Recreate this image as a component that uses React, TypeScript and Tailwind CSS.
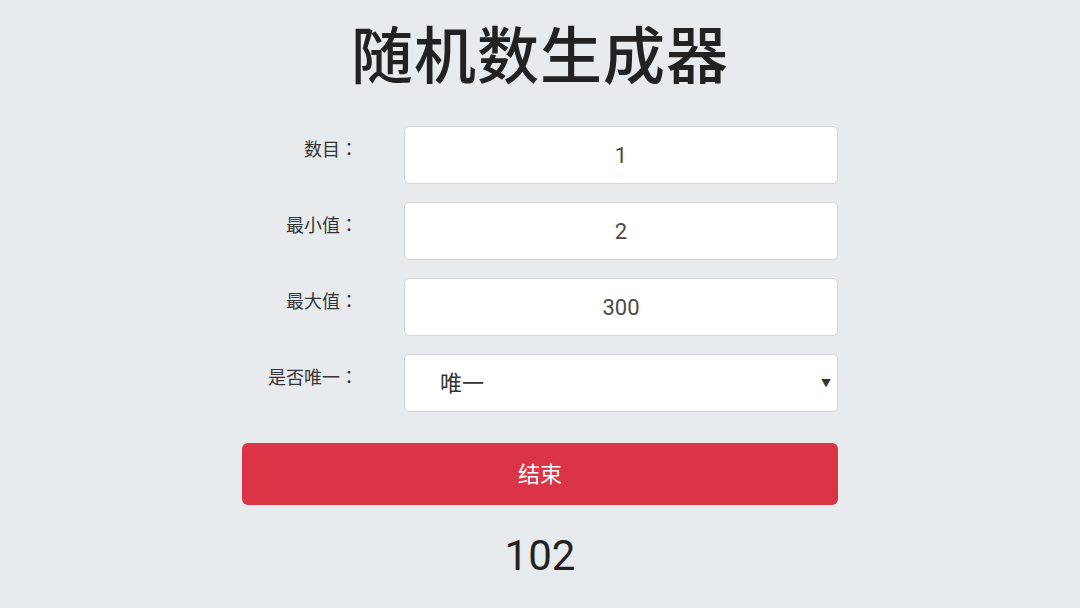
import React from "react";

const font = { fontFamily: '"Roboto", "Noto Sans CJK SC", sans-serif' } as const;
const labelFont = { fontFamily: '"Noto Sans CJK TC", "Noto Sans CJK SC", sans-serif' } as const;

function Row({ label, children }: { label: string; children: React.ReactNode }) {
  return (
    <div className="flex items-start">
      <div className="w-[162px] shrink-0 pr-[46px] pt-[9px] text-right text-[18px] leading-[26px] text-[#333]" style={labelFont}>{label}</div>
      <div className="flex-1">{children}</div>
    </div>
  );
}

export default function App() {
  return (
    <div className="w-[1080px] h-[608px] bg-[#e8ebee] overflow-hidden" style={font}>
      <div className="flex flex-col items-center">
        <h1 className="mt-[20px] text-[62px] leading-[76px] font-medium text-[#222] tracking-[1px]">随机数生成器</h1>
        <div className="mt-[30px] w-[596px] flex flex-col gap-[18px]">
          <Row label="数目：">
            <div className="h-[58px] rounded-[5px] border border-[#cfd4d9] bg-white flex items-center justify-center text-[22px] text-[#4a4a4a]">1</div>
          </Row>
          <Row label="最小值：">
            <div className="h-[58px] rounded-[5px] border border-[#cfd4d9] bg-white flex items-center justify-center text-[22px] text-[#4a4a4a]">2</div>
          </Row>
          <Row label="最大值：">
            <div className="h-[58px] rounded-[5px] border border-[#cfd4d9] bg-white flex items-center justify-center text-[22px] text-[#4a4a4a]">300</div>
          </Row>
          <Row label="是否唯一：">
            <div className="h-[58px] rounded-[5px] border border-[#cfd4d9] bg-white flex items-center pl-[35px] pr-[6px] text-[22px] text-[#333]">
              <span className="flex-1">唯一</span>
              <span className="text-[10px] text-[#333]">▼</span>
            </div>
          </Row>
          <button className="mt-[13px] h-[62px] w-full rounded-[6px] bg-[#dc3447] text-white text-[22px]">结束</button>
          <div className="mt-[5px] text-center text-[42px] leading-[56px] text-[#222]">102</div>
        </div>
      </div>
    </div>
  );
}
